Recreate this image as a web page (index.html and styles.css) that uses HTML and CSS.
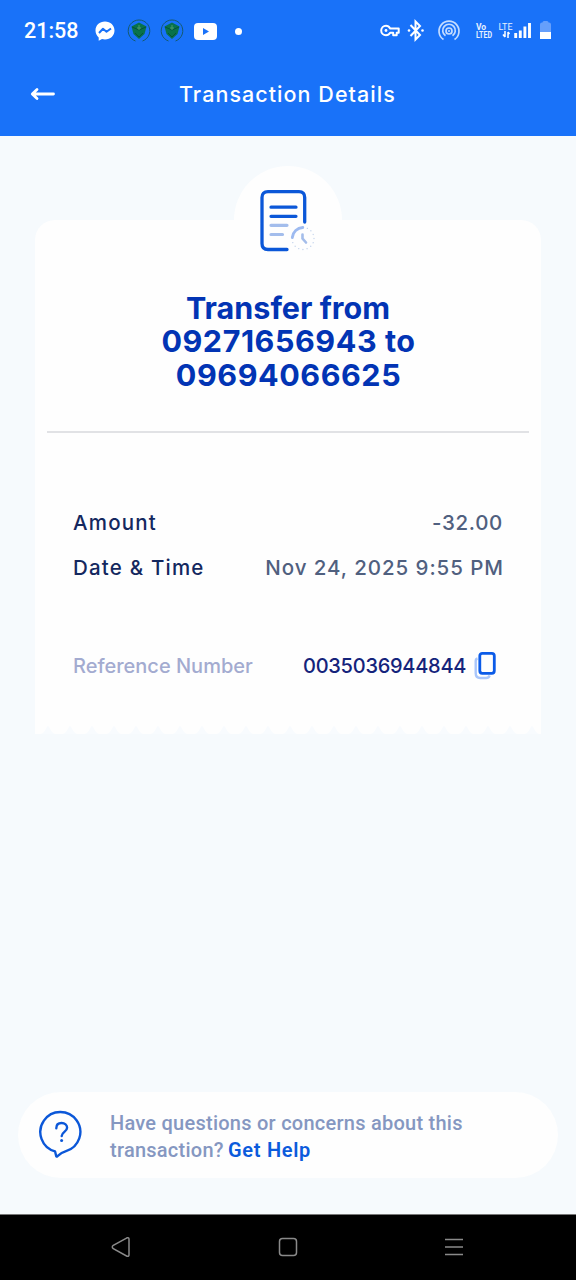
FILE: index.html
```html
<!DOCTYPE html>
<html lang="en">
<head>
<meta charset="utf-8">
<title>Transaction Details</title>
<link rel="stylesheet" href="styles.css">
</head>
<body>
<div class="screen">
  <header class="top">
    <div class="status">
      <span class="clock">21:58</span>
      <svg class="messenger" width="20" height="20" viewBox="0 0 20 20"><path fill="#fff" d="M10 .5C4.500 .5 .5 4.300 .5 9.500c0 2.800 1.200 5.200 3.200 6.900v3.300l3.300-1.600c1 .3 1.900 .4 3 .4 5.500 0 9.500-3.900 9.500-9S15.500 .5 10 .5z"/><path fill="none" stroke="#1972f9" stroke-width="2" stroke-linejoin="round" d="M4 12l4-4.200 3.500 3L16 7.500"/></svg>
      <svg class="shield" width="24" height="24" viewBox="0 0 24 24"><path d="M8.500 22A10.800 10.800 0 1 1 15.500 22" fill="none" stroke="#145a70" stroke-width="1"/><path d="M12 3.500l7.500 4-2 7.500-5.500 5-5.500-5-2-7.500z" fill="#08724c"/><path d="M5 8l7 3 7-3M8 14l4 4 4-4" fill="none" stroke="#075239" stroke-width="1"/><path d="M12 6v5M10 9h4" stroke="#4a9b69"/></svg>
      <svg class="shield" width="24" height="24" viewBox="0 0 24 24"><path d="M8.500 22A10.800 10.800 0 1 1 15.500 22" fill="none" stroke="#145a70" stroke-width="1"/><path d="M12 3.500l7.500 4-2 7.500-5.500 5-5.500-5-2-7.500z" fill="#08724c"/><path d="M5 8l7 3 7-3M8 14l4 4 4-4" fill="none" stroke="#075239" stroke-width="1"/><path d="M12 6v5M10 9h4" stroke="#4a9b69"/></svg>
      <svg class="video" width="23" height="17" viewBox="0 0 23 17"><rect width="23" height="17" rx="4" fill="#fff"/><path d="M9 5l6 3.500L9 12z" fill="#1972f9"/></svg>
      <i class="dot"></i>
      <svg class="signals" width="174" height="24" viewBox="0 0 174 24" fill="none" stroke="#fff">
        <path stroke-width="2" stroke-linejoin="round" d="M10.200 9.500C9 7.400 7.700 6.700 6 6.700a4.700 4.700 0 0 0 0 9.600c1.800 0 3.200-.8 4.200-2.500h3v2.500h3.500v-2.500h2V9.500z"/><circle cx="6" cy="11.500" r="1.400" fill="#fff" stroke="none"/>
        <path stroke-width="2" d="M30.500 6l9.500 10-4.500 4.500v-18L40 7l-9.500 10"/><circle cx="29" cy="11.500" r="1.300" fill="#fff" stroke="none"/><circle cx="42.500" cy="11.500" r="1.300" fill="#fff" stroke="none"/>
        <g stroke="#c4dcff" stroke-width="1.700"><path d="M63.500 20.500a10 10 0 1 1 11 0"/><path d="M65.500 16.800a6.300 6.300 0 1 1 7 0"/><circle cx="69" cy="12" r="3"/><circle cx="69" cy="12" r="1" fill="#c4dcff" stroke="none"/></g>
        <g fill="#e6f0ff" stroke="none"><text x="96" y="11" class="tiny bold">Vo</text><text x="96" y="19" class="tiny bold" textLength="16" lengthAdjust="spacingAndGlyphs">LTED</text><text x="118.500" y="11" class="tiny lte" textLength="14" lengthAdjust="spacingAndGlyphs">LTE</text></g>
        <path stroke-width="1.500" d="M125 12v6M125 18l-2-2.500M128 19v-6M128 13l1.500 2"/>
        <path stroke-width="2.900" d="M135.700 19v-5M140.300 19v-7.500M144.900 19V7.500M149.500 19V4"/>
        <path d="M160 5.500q0-2 2-2h.5q0-1.500 1.500-1.500h3q1.500 0 1.500 1.500h.5q2 0 2 2V13h-11z" fill="#669ffb" stroke="none"/><path d="M160 13h11v7h-11z" fill="#fff" stroke="none"/>
      </svg>
    </div>
    <div class="bar">
      <svg class="back" width="26" height="16" viewBox="0 0 26 16"><path d="M7 3.500L2.300 8 7 12.500M2.500 8H23.500" fill="none" stroke="#fff" stroke-width="2.800" stroke-linecap="round" stroke-linejoin="round"/></svg>
      <h1 class="title">Transaction Details</h1>
    </div>
  </header>
  <main class="content">
    <div class="bubble">
      <svg width="60" height="64" viewBox="0 0 60 64" fill="none" stroke-linecap="round"><path d="M46.700 34V9.500Q46.700 3.700 41 3.700H10Q4 3.700 4 9.500V55.500Q4 61.500 10 61.500H29" stroke="#0b57d8" stroke-width="3.300"/><path d="M13 19.200h25M13 28.300h25" stroke="#0b57d8" stroke-width="3.200"/><path d="M13 37.300h16M13 46.500h11.500" stroke="#a3bdec" stroke-width="3.200"/><circle cx="45" cy="50.500" r="11" stroke="#c3d3ec" stroke-width="1.300" stroke-dasharray=".1 4.200"/><path d="M34.300 49.500a11 11 0 0 1 10.500-10" stroke="#9dbaf0" stroke-width="2.800"/><path d="M44.500 46.500v4l3.500 4" stroke="#a4bdea" stroke-width="2.600"/></svg>
    </div>
    <section class="card">
      <h2 class="headline"><span class="h-name">Transfer from</span><span class="h-phone">09271656943 to</span><span class="h-phone">09694066625</span></h2>
      <div class="row amount"><span class="label">Amount</span><span class="value v-amount">-32.00</span></div>
      <div class="row date"><span class="label">Date &amp; Time</span><span class="value">Nov 24, 2025 9:55 PM</span></div>
      <div class="row ref"><span class="ref-label">Reference Number</span><span class="ref-no">0035036944844</span><svg class="copy" width="24" height="30" viewBox="0 0 24 30" fill="none"><path d="M3.500 7.500q-1.800 .5-1.800 2.700V22q0 5 4.500 5h6q2.500 0 3.500-2.500" stroke="#a9c6fb" stroke-width="2.400"/><rect x="5.800" y="2.300" width="14.500" height="20" rx="2.500" stroke="#0b5be8" stroke-width="2.800"/></svg></div>
      <svg class="teeth" width="506" height="10"><defs><pattern id="tooth" width="22" height="10" patternUnits="userSpaceOnUse"><path d="M6 10Q9 9 12 3q1-2 2 0 3 6 6 7z" fill="#f8fbfe"/></pattern></defs><rect width="506" height="10" fill="url(#tooth)"/></svg>
    </section>
  </main>
  <aside class="help">
    <svg class="ask" width="46" height="50" viewBox="0 0 46 50" fill="none" stroke="#0b57d8" stroke-width="2.400" stroke-linecap="round" stroke-linejoin="round"><path d="M16 41.300A20 20 0 1 1 27 41.200Q22.500 42.500 18.500 46.200 17 47.200 17 45.300z"/><path d="M17.300 18.200c0-3.500 2.300-5.200 5.300-5.200 3.200 0 5.500 2 5.500 4.800 0 4-5.400 4.200-5.400 8.200"/><circle cx="22.600" cy="30.500" r="1.500" fill="#0b57d8" stroke="none"/></svg>
    <p class="help-text"><span>Have questions or concerns about this</span><br><span>transaction?</span> <a class="link">Get Help</a></p>
  </aside>
  <nav class="nav">
    <svg width="20" height="22" viewBox="0 0 20 22"><path d="M16 1.800L2.300 9.300q-2 1.700 0 3.400L16 20.200q2 .6 2-1.500V3.300Q18 1.200 16 1.800z"/></svg>
    <svg width="20" height="20" viewBox="0 0 20 20"><rect x="1.500" y="1.500" width="17" height="17" rx="3"/></svg>
    <svg width="20" height="20" viewBox="0 0 20 20"><path d="M1 2.500h18M1 10h18M1 17.500h18"/></svg>
  </nav>
</div>
</body>
</html>
```
FILE: styles.css
```css
* { box-sizing: border-box; }
body { margin: 0; }
svg { display: block; flex: none; }
.screen { width: 576px; height: 1280px; display: flex; flex-direction: column; background: #f6fafd; overflow: hidden; font-family: Inter, "Liberation Sans", sans-serif; white-space: nowrap; }
.top { height: 136px; background: #1972f9; color: #fff; flex: none; }
.status { height: 62px; display: flex; align-items: center; padding-left: 24px; }
.clock { font: 500 21.5px/24px Roboto, sans-serif; width: 71px; }
.shield { margin-left: 9px; }
.messenger + .shield { margin-left: 12px; }
.video { margin-left: 10px; }
.dot { width: 7px; height: 7px; border-radius: 50%; background: #fff; margin-left: 18px; }
.signals { margin-left: 138px; }
.tiny { font-family: Roboto, sans-serif; font-size: 8.5px; }
.bold { font-weight: 700; }
.bar { height: 64px; display: flex; align-items: center; padding-left: 30px; }
.title { margin: 0 0 0 123px; font-size: 21.5px; font-weight: 500; line-height: 30px; letter-spacing: 1.05px; }
.content { flex: none; height: 956px; display: flex; flex-direction: column; align-items: center; padding-top: 30px; }
.bubble { width: 108px; height: 108px; border-radius: 50%; background: #fefefe; display: flex; justify-content: center; padding-top: 22px; flex: none; z-index: 1; }
.card { width: 506px; height: 514px; margin-top: -54px; border-radius: 20px 20px 0 0; background: #fefefe; display: flex; flex-direction: column; padding: 0 12px; flex: none; }
.headline { margin: 0; height: 213px; padding-top: 70.5px; border-bottom: 2px solid #e1e2e5; display: flex; flex-direction: column; align-items: center; color: #0234b4; font-size: 30.5px; font-weight: 700; line-height: 33.5px; flex: none; }
.h-phone { letter-spacing: .55px; margin-left: 1px; }
.row { display: flex; justify-content: space-between; align-items: center; padding: 0 25px 0 26px; font-size: 20.5px; font-weight: 500; line-height: 28px; }
.label { color: #14285f; letter-spacing: 1.2px; }
.value { color: #50607f; letter-spacing: .95px; }
.v-amount { letter-spacing: .7px; margin-right: 1px; }
.amount { margin-top: 76px; }
.date { margin-top: 17px; }
.ref { margin-top: 69px; height: 30px; font-size: 20px; justify-content: flex-start; }
.ref-label { color: #a3abd0; width: 230px; }
.ref-no { color: #14237b; width: 171px; letter-spacing: -.25px; }
.teeth { margin: auto -12px 0; }
.help { margin: 0 18px; height: 86px; border-radius: 43px; background: #fefefe; display: flex; align-items: center; padding-left: 21px; flex: none; }
.help-text { margin: 3px 0 0 25px; font: 500 20px/27px Roboto, sans-serif; color: #8597c1; letter-spacing: .25px; }
.link { color: #0b5bdc; font-weight: 600; letter-spacing: .7px; margin-left: -1px; }
.nav { margin-top: auto; height: 66px; background: #000; border-top: 1px solid #777; display: flex; align-items: center; justify-content: space-between; padding: 0 112px 2px 111px; }
.nav svg { fill: none; stroke: #8a8a8a; stroke-width: 1.5; }
```
